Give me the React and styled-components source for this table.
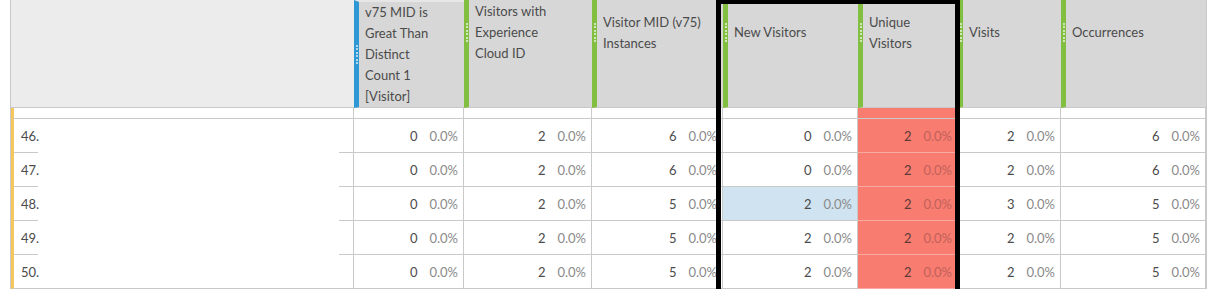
import React from 'react';
import styled, { createGlobalStyle } from 'styled-components';

const GlobalStyle = createGlobalStyle`
  body {
    margin: 0;
    background: #fff;
    font-family: Lato, "Open Sans", sans-serif;
  }
`;

const columns = [
  { key: 'mid', lines: ['v75 MID is', 'Great Than', 'Distinct', 'Count 1', '[Visitor]'], bar: '#2e98d4', cap: true },
  { key: 'ecid', lines: ['Visitors with', 'Experience', 'Cloud ID'], bar: '#82bf41' },
  { key: 'inst', lines: ['Visitor MID (v75)', 'Instances'], bar: '#82bf41' },
  { key: 'new', lines: ['New Visitors'], bar: '#82bf41' },
  { key: 'uniq', lines: ['Unique', 'Visitors'], bar: '#82bf41' },
  { key: 'visits', lines: ['Visits'], bar: '#82bf41' },
  { key: 'occ', lines: ['Occurrences'], bar: '#82bf41' },
];

const rows = [
  { label: '46.', values: [0, 2, 6, 0, 2, 2, 6] },
  { label: '47.', values: [0, 2, 6, 0, 2, 2, 6] },
  { label: '48.', values: [0, 2, 5, 2, 2, 3, 5], selected: 3 },
  { label: '49.', values: [0, 2, 5, 2, 2, 2, 5] },
  { label: '50.', values: [0, 2, 5, 2, 2, 2, 5] },
];

// Unique Visitors column is flagged
const HOT = 4;

const Page = styled.div`
  position: relative;
  padding-left: 10px;
`;

const Table = styled.div`
  display: grid;
  grid-template-columns: 343px 110px 128px 131px 135px 100px 103px 145px;
  width: 1197px;
  box-sizing: border-box;
  border-left: 1px solid #c9c9c9;
  border-right: 1px solid #c9c9c9;
  color: #4b4b4b;
  font-size: 13px;
`;

const CornerCell = styled.div`
  height: 108px;
  box-sizing: border-box;
  background: #ececec;
  border-bottom: 1px solid #c9c9c9;
`;

const HeaderCell = styled.div`
  height: 108px;
  box-sizing: border-box;
  background: #d7d7d7;
  border-left: 5px solid ${(p) => p.$bar};
  border-top: ${(p) => (p.$cap ? '2px solid #e6e6e6' : '0')};
  border-bottom: 1px solid #c9c9c9;
`;

const Label = styled.div`
  display: flex;
  align-items: center;
  min-height: ${(p) => (p.$tall ? '105px' : '65px')};
`;

const Grip = styled.div`
  display: flex;
  flex-direction: column;
  align-items: center;
  gap: 1.4px;
  width: 5px;
  margin-left: -5px;
`;

const Dot = styled.span`
  width: 2px;
  height: 2px;
  border-radius: 50%;
  background: rgba(255, 255, 255, 0.85);
`;

const Title = styled.div`
  padding-left: 6px;
  line-height: 21px;
  white-space: nowrap;
`;

const Spacer = styled.div`
  height: 11px;
  box-sizing: border-box;
  border-bottom: 1px solid #c9c9c9;
  border-right: 1px solid #c9c9c9;
  border-left: ${(p) => (p.$first ? '3px solid #f5c75e' : '0')};
  background: ${(p) => (p.$hot ? '#f97c70' : '#fff')};
`;

const DimCell = styled.div`
  height: 34px;
  box-sizing: border-box;
  display: flex;
  align-items: center;
  padding-left: 7px;
  border-left: 3px solid #f5c75e;
  border-right: 1px solid #c9c9c9;
  border-bottom: ${(p) => (p.$masked ? '0' : '1px solid #c9c9c9')};
  background: ${(p) =>
    p.$masked
      ? 'linear-gradient(#c9c9c9, #c9c9c9) left bottom / 24px 1px no-repeat, linear-gradient(#c9c9c9, #c9c9c9) right bottom / 14px 1px no-repeat, #fff'
      : '#fff'};
`;

const ValueCell = styled.div`
  height: 34px;
  box-sizing: border-box;
  display: flex;
  align-items: center;
  justify-content: flex-end;
  gap: 12px;
  padding-right: 5px;
  border-right: 1px solid #c9c9c9;
  border-bottom: 1px solid ${(p) => (p.$hot ? '#f7aaa2' : '#c9c9c9')};
  background: ${(p) => (p.$hot ? '#f97c70' : p.$selected ? '#d0e3f0' : '#fff')};
`;

const Num = styled.span`
  color: ${(p) => (p.$hot ? '#5b3a37' : '#4b4b4b')};
`;

const Pct = styled.span`
  color: ${(p) => (p.$hot ? '#c0625a' : '#8a8a8a')};
`;

const Frame = styled.div`
  position: absolute;
  left: 716px;
  top: -1px;
  width: 244px;
  height: 296px;
  box-sizing: border-box;
  border: 5px solid #000;
  pointer-events: none;
`;

const Header = ({ col }) => (
  <HeaderCell $bar={col.bar} $cap={col.cap}>
    <Label $tall={col.cap}>
      <Grip>
        {[0, 1, 2, 3, 4, 5].map((i) => (
          <Dot key={i} />
        ))}
      </Grip>
      <Title>
        {col.lines.map((line, i) => (
          <div key={i}>{line}</div>
        ))}
      </Title>
    </Label>
  </HeaderCell>
);

export default function App() {
  return (
    <>
      <GlobalStyle />
      <Page>
        <Table>
          <CornerCell />
          {columns.map((col) => (
            <Header key={col.key} col={col} />
          ))}

          <Spacer $first />
          {columns.map((col, i) => (
            <Spacer key={col.key} $hot={i === HOT} />
          ))}

          {rows.map((row, r) => (
            <React.Fragment key={row.label}>
              <DimCell $masked={r < rows.length - 1}>{row.label}</DimCell>
              {row.values.map((v, i) => (
                <ValueCell key={i} $hot={i === HOT} $selected={row.selected === i}>
                  <Num $hot={i === HOT}>{v}</Num>
                  <Pct $hot={i === HOT}>0.0%</Pct>
                </ValueCell>
              ))}
            </React.Fragment>
          ))}
        </Table>
        <Frame />
      </Page>
    </>
  );
}
